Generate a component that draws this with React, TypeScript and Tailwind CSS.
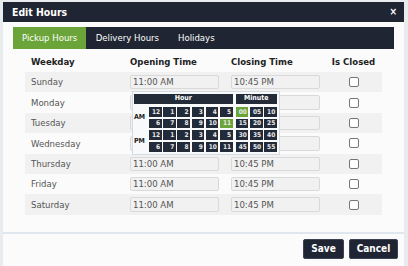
import React from "react";

const FONT = { fontFamily: '"DejaVu Sans Condensed", "DejaVu Sans", Verdana, sans-serif' };

const days = ["Sunday", "Monday", "Tuesday", "Wednesday", "Thursday", "Friday", "Saturday"];
const hours = [
  ["12", "1", "2", "3", "4", "5"],
  ["6", "7", "8", "9", "10", "11"],
  ["12", "1", "2", "3", "4", "5"],
  ["6", "7", "8", "9", "10", "11"],
];
const minutes = [
  ["00", "05", "10"],
  ["15", "20", "25"],
  ["30", "35", "40"],
  ["45", "50", "55"],
];

function Cell({ v, active }: { v: string; active?: boolean }) {
  return (
    <div
      className={
        "flex items-center justify-end pr-[1.5px] text-[6.5px] font-bold leading-none text-[#e8eaee] " +
        (active ? "bg-[#6ba53a]" : "bg-[#232a38]")
      }
    >
      {v}
    </div>
  );
}

function Picker() {
  return (
    <div className="absolute left-[8px] top-[16px] z-10 w-[148px] h-[64px] border border-[#d3dae2] bg-[#f8f9fa] pl-[1px] pt-[2px] pr-[2px] pb-[2px] flex gap-[3px]">
      <div className="flex flex-col">
        <div className="h-[10px] w-[98.7px] bg-[#232a38] text-white text-[7px] font-bold flex items-center justify-center leading-none">
          Hour
        </div>
        <div className="mt-[3px] flex">
          <div className="w-[15px] flex flex-col gap-[2px]">
            <div className="h-[21.4px] flex items-center text-[7px] font-bold text-[#222] leading-none">AM</div>
            <div className="h-[21.4px] flex items-center text-[7px] font-bold text-[#222] leading-none">PM</div>
          </div>
          <div className="grid grid-cols-[repeat(6,12.7px)] grid-rows-[repeat(4,9.7px)] gap-x-[1.5px] gap-y-[2px]">
            {hours.map((row, r) =>
              row.map((h, c) => <Cell key={r + "-" + c} v={h} active={r === 1 && c === 5} />)
            )}
          </div>
        </div>
      </div>
      <div className="flex flex-col">
        <div className="h-[10px] w-[41.1px] bg-[#232a38] text-white text-[7px] font-bold flex items-center justify-center leading-none">
          Minute
        </div>
        <div className="mt-[3px] grid grid-cols-[repeat(3,12.7px)] grid-rows-[repeat(4,9.7px)] gap-x-[1.5px] gap-y-[2px]">
          {minutes.map((row, r) =>
            row.map((m, c) => <Cell key={r + "-" + c} v={m} active={r === 0 && c === 0} />)
          )}
        </div>
      </div>
    </div>
  );
}

function TimeInput({ value }: { value: string }) {
  return (
    <div className="w-[89px] h-[14.5px] border border-[#d9d9d9] bg-[#f1f1f1] rounded-[2px] pl-[2px] flex items-center text-[9.5px] text-[#555] leading-none">
      {value}
    </div>
  );
}

export default function App() {
  return (
    <div className="w-[408px] h-[266px] overflow-hidden bg-[#e9ecef] pl-[3px] pt-[2px]" style={FONT}>
      <div className="w-[401px] h-[264px] bg-[#fbfbfb] flex flex-col">
        <div className="h-[20px] shrink-0 bg-[#1f2532] flex items-center justify-between pl-[9px] pr-[7px]">
          <span className="text-white font-bold text-[10.4px] leading-none">Edit Hours</span>
          <span className="text-white font-bold text-[10px] leading-none">×</span>
        </div>
        <div className="h-[210px] shrink-0 px-[10px] pt-[5px]">
          <div className="h-[22px] bg-[#1f2532] flex">
            <div className="px-[9px] flex items-center bg-[#6ba53a] text-white text-[9.5px] leading-none">Pickup Hours</div>
            <div className="px-[9.5px] flex items-center text-white text-[9.5px] leading-none">Delivery Hours</div>
            <div className="px-[9.5px] flex items-center text-white text-[9.5px] leading-none">Holidays</div>
          </div>
          <div className="mx-[12px] mt-[3px]">
            <div className="grid grid-cols-[99px_101px_100px_57px] h-[20px] items-center text-[9.5px] font-bold text-[#222] leading-none">
              <div className="pl-[6px]">Weekday</div>
              <div className="pl-[6px]">Opening Time</div>
              <div className="pl-[6px]">Closing Time</div>
              <div className="text-center">Is Closed</div>
            </div>
            {days.map((d, i) => (
              <div
                key={d}
                className={
                  "grid grid-cols-[99px_101px_100px_57px] h-[20.4px] items-center text-[9.5px] text-[#555] leading-none " +
                  (i % 2 === 0 ? "bg-[#f1f1f1]" : "bg-[#fbfbfb]")
                }
              >
                <div className="pl-[6px]">{d}</div>
                <div className="pl-[6px] relative">
                  <TimeInput value="11:00 AM" />
                  {i === 0 && <Picker />}
                </div>
                <div className="pl-[6px]">
                  <TimeInput value="10:45 PM" />
                </div>
                <div className="flex justify-center">
                  <div className="w-[10px] h-[10px] border border-[#767676] rounded-[2px] bg-white" />
                </div>
              </div>
            ))}
          </div>
        </div>
        <div className="flex-1 border-t-[2px] border-[#dfe6ed] flex justify-end gap-[5px] pr-[6px] pt-[5px]">
          <button className="w-[41px] h-[20px] bg-[#1f2532] border border-[#3b4354] rounded-[2px] text-white font-bold text-[10px] leading-none">
            Save
          </button>
          <button className="w-[49px] h-[20px] bg-[#1f2532] border border-[#3b4354] rounded-[2px] text-white font-bold text-[10px] leading-none">
            Cancel
          </button>
        </div>
      </div>
    </div>
  );
}
